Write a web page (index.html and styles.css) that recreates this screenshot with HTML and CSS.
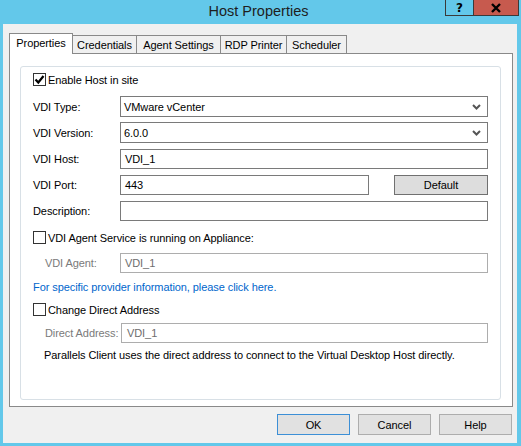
FILE: index.html
```html
<!DOCTYPE html>
<html>
<head>
<meta charset="utf-8">
<link rel="stylesheet" href="styles.css">
</head>
<body>
<div class="window">
  <div class="titlebar">
    <div class="title">Host Properties</div>
    <div class="tbtns">
      <div class="tbtn help">?</div>
      <div class="tbtn close">
        <svg width="12" height="10" viewBox="0 0 12 10"><path d="M2 1 L10 9 M10 1 L2 9" stroke="#000" stroke-width="2.4" fill="none"/></svg>
      </div>
    </div>
  </div>
  <div class="client">
    <div class="tabs">
      <div class="tab active">Properties</div>
      <div class="tab">Credentials</div>
      <div class="tab">Agent Settings</div>
      <div class="tab">RDP Printer</div>
      <div class="tab">Scheduler</div>
    </div>
    <div class="panel">
      <div class="group">
        <div class="check-row r-enable">
          <span class="cb checked"><svg width="11" height="11" viewBox="0 0 11 11"><path d="M1.5 5.5 L4.3 8.5 L9.5 2" stroke="#000" stroke-width="2.2" fill="none"/></svg></span>
          <span>Enable Host in site</span>
        </div>
        <div class="row r-type">
          <div class="label">VDI Type:</div>
          <div class="field select"><span>VMware vCenter</span><svg class="chev" width="9" height="6" viewBox="0 0 9 6"><path d="M1 1 L4.5 4.5 L8 1" stroke="#555" stroke-width="2" fill="none"/></svg></div>
        </div>
        <div class="row r-ver">
          <div class="label">VDI Version:</div>
          <div class="field select"><span>6.0.0</span><svg class="chev" width="9" height="6" viewBox="0 0 9 6"><path d="M1 1 L4.5 4.5 L8 1" stroke="#555" stroke-width="2" fill="none"/></svg></div>
        </div>
        <div class="row r-host">
          <div class="label">VDI Host:</div>
          <div class="field">VDI_1</div>
        </div>
        <div class="row r-port">
          <div class="label">VDI Port:</div>
          <div class="field port">443</div>
          <div class="btn default">Default</div>
        </div>
        <div class="row r-desc">
          <div class="label">Description:</div>
          <div class="field"></div>
        </div>
        <div class="check-row r-agentcb">
          <span class="cb"></span>
          <span>VDI Agent Service is running on Appliance:</span>
        </div>
        <div class="row r-agent">
          <div class="label sub disabled">VDI Agent:</div>
          <div class="field disabled-field">VDI_1</div>
        </div>
        <div class="link r-link">For specific provider information, please click here.</div>
        <div class="check-row r-directcb">
          <span class="cb"></span>
          <span>Change Direct Address</span>
        </div>
        <div class="row r-direct">
          <div class="label sub disabled">Direct Address:</div>
          <div class="field disabled-field direct">VDI_1</div>
        </div>
        <div class="note">Parallels Client uses the direct address to connect to the Virtual Desktop Host directly.</div>
      </div>
    </div>
    <div class="buttons">
      <div class="btn ok">OK</div>
      <div class="btn">Cancel</div>
      <div class="btn">Help</div>
    </div>
  </div>
</div>
</body>
</html>
```
FILE: styles.css
```css
* { box-sizing: border-box; }
html, body { margin: 0; padding: 0; }
body {
  width: 521px;
  height: 446px;
  background: #63c8ea;
  font-family: "Liberation Sans", Arial, sans-serif;
  font-size: 11px;
  letter-spacing: -0.08px;
  color: #000;
  overflow: hidden;
  white-space: nowrap;
}
.window {
  width: 521px;
  height: 446px;
  display: flex;
  flex-direction: column;
}
.titlebar {
  height: 24px;
  position: relative;
  display: flex;
  justify-content: center;
}
.title {
  font-size: 14.5px;
  letter-spacing: 0;
  color: #1e1e1e;
  line-height: 23px;
  padding-right: 4px;
}
.tbtns {
  position: absolute;
  top: 0;
  right: 2px;
  display: flex;
}
.tbtn {
  height: 16px;
  display: flex;
  align-items: center;
  justify-content: center;
  border: 1px solid #3a3a3a;
  border-top: none;
}
.tbtn.help {
  width: 28px;
  font-family: "DejaVu Sans", sans-serif;
  font-weight: bold;
  font-size: 12px;
  border-right: none;
}
.tbtn.close {
  width: 46px;
  background: #c75a4e;
}
.client {
  flex: 1;
  margin: 0 4px 3px 3px;
  background: #f0f0f0;
  padding: 9px 2px 0 6px;
  display: flex;
  flex-direction: column;
}
.tabs {
  display: flex;
  align-items: flex-end;
  height: 20px;
  position: relative;
  z-index: 1;
}
.tab {
  height: 18px;
  border: 1px solid #898989;
  border-bottom: none;
  border-left: none;
  padding: 0;
  text-align: center;
  line-height: 18px;
  background: #f0f0f0;
}
.tab.active {
  height: 21px;
  margin-bottom: -1px;
  background: #fff;
  border-left: 1px solid #898989;
  line-height: 18px;
  width: 64px;
}
.tab:nth-child(2) { width: 64px; }
.tab:nth-child(3) { width: 84px; }
.tab:nth-child(4) { width: 66px; }
.tab:nth-child(5) { width: 60px; }
.panel {
  width: 504px;
  height: 354px;
  background: #fff;
  border: 1px solid #898989;
  padding: 12px 11px 6px 10px;
}
.group {
  height: 100%;
  border: 1px solid #d8e0e6;
  border-radius: 3px;
  padding: 0 12px 0 12px;
  display: flex;
  flex-direction: column;
}
.check-row {
  display: flex;
  align-items: center;
  height: 13px;
}
.cb {
  width: 13px;
  height: 13px;
  border: 1px solid #333;
  background: #fff;
  margin-right: 2px;
  display: flex;
  align-items: center;
  justify-content: center;
}
.row {
  display: flex;
  align-items: center;
}
.label { width: 87px; flex: none; }
.label.sub { padding-left: 12px; }
.disabled { color: #7a7a7a; }
.field {
  flex: 1;
  height: 20px;
  border: 1px solid #7a7a7a;
  display: flex;
  align-items: center;
  padding-left: 4px;
  background: #fff;
}
.field.select { height: 21px; justify-content: space-between; padding-right: 6px; padding-left: 3px; }
.chev { flex: none; }
.field.port { flex: none; width: 249px; }
.disabled-field { border-color: #adadad; color: #6d6d6d; }
.field.direct { margin-left: 1px; padding-left: 5px; }
.btn {
  height: 21px;
  background: #e1e1e1;
  border: 1px solid #adadad;
  display: flex;
  align-items: center;
  justify-content: center;
}
.btn.default {
  width: 94px;
  margin-left: 25px;
  background: #dddddd;
  border-color: #707070;
  height: 20px;
}
.r-enable { margin-top: 6px; }
.r-type { margin-top: 10px; }
.r-ver { margin-top: 5px; }
.r-host { margin-top: 6px; }
.r-port { margin-top: 6px; }
.r-desc { margin-top: 6px; }
.r-agentcb { margin-top: 10px; }
.r-agent { margin-top: 9px; }
.r-link { margin-top: 6px; color: #0066cc; height: 16px; line-height: 16px; }
.r-directcb { margin-top: 8px; }
.r-direct { margin-top: 7px; }
.note { margin-top: 4px; padding-left: 11px; height: 16px; line-height: 16px; }
.buttons {
  display: flex;
  justify-content: flex-end;
  gap: 8px;
  margin-top: 7px;
  padding-right: 3px;
}
.buttons .btn { width: 73px; }
.btn.ok { border-color: #3c8fd6; }
```
